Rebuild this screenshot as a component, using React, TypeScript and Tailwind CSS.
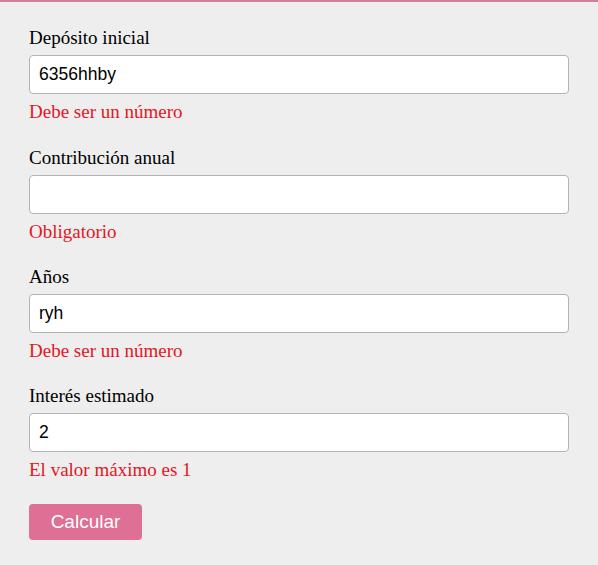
import React, { useState } from "react";

type Field = {
  id: string;
  label: string;
  value: string;
  error: string;
};

const initialFields: Field[] = [
  { id: "deposito", label: "Depósito inicial", value: "6356hhby", error: "Debe ser un número" },
  { id: "contribucion", label: "Contribución anual", value: "", error: "Obligatorio" },
  { id: "anos", label: "Años", value: "ryh", error: "Debe ser un número" },
  { id: "interes", label: "Interés estimado", value: "2", error: "El valor máximo es 1" },
];

// spacing after each error message, taken from the reference
const gaps = ["mb-[25px]", "mb-[24px]", "mb-[24px]", "mb-[24px]"];

export default function App() {
  const [fields, setFields] = useState(initialFields);

  const update = (id: string, value: string) => {
    setFields((prev) => prev.map((f) => (f.id === id ? { ...f, value } : f)));
  };

  return (
    <div className="min-h-screen w-full bg-[#eeeeee] border-t-2 border-[#cf7fa0] px-[29px] pt-[25px] font-['Liberation_Serif',serif] text-black">
      <form onSubmit={(e) => e.preventDefault()}>
        {fields.map((f, i) => (
          <div key={f.id} className={gaps[i]}>
            <label htmlFor={f.id} className="block text-[19px] leading-[21px]">
              {f.label}
            </label>
            <input
              id={f.id}
              type="text"
              value={f.value}
              onChange={(e) => update(f.id, e.target.value)}
              className="mt-[7px] block h-[39px] w-full rounded-[4px] border border-[#b3b3b3] bg-white px-[9px] font-['Liberation_Sans',Arial,sans-serif] text-[17.5px] text-black outline-none"
            />
            <p className="mt-[7px] text-[19px] leading-[21px] text-[#e4161f]">{f.error}</p>
          </div>
        ))}
        <button
          type="submit"
          className="h-[36px] w-[113px] rounded-[4px] bg-[#dd7094] font-['Liberation_Sans',Arial,sans-serif] text-[19px] text-white"
        >
          Calcular
        </button>
      </form>
    </div>
  );
}
